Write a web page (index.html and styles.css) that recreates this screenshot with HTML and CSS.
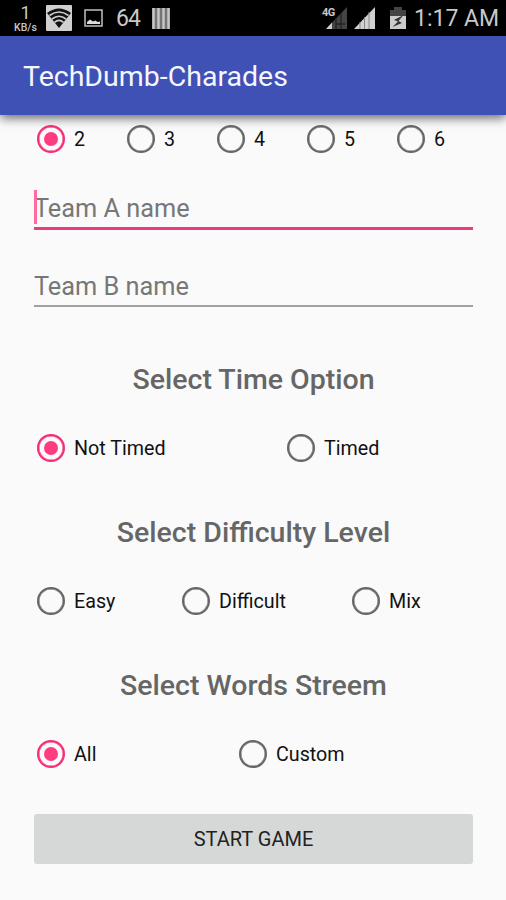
FILE: index.html
```html
<!DOCTYPE html>
<html lang="en">
<head>
<meta charset="utf-8">
<title>TechDumb-Charades</title>
<link rel="stylesheet" href="styles.css">
</head>
<body>
<div class="status">
  <div class="speed"><span class="speed-num">1</span><span class="speed-unit">KB/s</span></div>
  <svg class="wifi" width="26" height="26" viewBox="0 0 26 26"><rect width="26" height="26" rx="1" fill="#d0d0d0"/><path d="M1 8Q13-1 25 8L13 23Z" fill="#111"/><g fill="none" stroke="#d0d0d0" stroke-width="1.6"><path d="M3.500 10.500Q13 3.500 22.500 10.500M6 14Q13 8.500 20 14M8.500 17.300Q13 13.500 17.500 17.300"/></g></svg>
  <svg class="photo" width="19" height="18" viewBox="0 0 19 18"><rect x="1" y="1" width="17" height="16" fill="none" stroke="#b5b5b5" stroke-width="1.600"/><path d="M3 15v-2l3-2.500 3 2 2.500-1 2 1.500 2.500-.5V15Z" fill="#ddd"/></svg>
  <span class="count">64</span>
  <svg class="bars" width="18" height="21" viewBox="0 0 18 21"><rect width="18" height="21" fill="#747474"/><path d="M1.500 0v21M6.500 0v21M11.500 0v21M16.500 0v21" stroke="#c8c8c8" stroke-width="2.400"/></svg>
  <div class="network">
    <svg width="26" height="23" viewBox="0 0 26 23"><path d="M4 22 25 0V22Z" fill="#444"/><path d="M4 22 10 15.500V22Z" fill="#ccc"/><path d="M14 11v11M19 6v16M14 17h9" stroke="#222" stroke-width="1.300"/></svg>
    <span class="network-label">4G</span>
  </div>
  <svg class="signal" width="21" height="22" viewBox="0 0 21 22"><path d="M0 22 21 0V22Z" fill="#d0d0d0"/><path d="M6 15v7M10.500 10v12M15 5v17" stroke="#888" stroke-width="1"/></svg>
  <svg class="battery" width="16" height="22" viewBox="0 0 16 22"><path d="M0 3H4V0H12V3H16V22H0Z" fill="#444"/><path d="M0 9H16V22H0Z" fill="#ccc"/><path d="M13.500 8 4 13 8 14.500 2.500 20 12 16 8.500 14Z" fill="#333"/></svg>
  <span class="clock">1:17 AM</span>
</div>
<header class="appbar"><h1>TechDumb-Charades</h1></header>
<main>
  <div class="options teams">
    <label class="option"><i class="radio on"></i><span>2</span></label>
    <label class="option"><i class="radio"></i><span>3</span></label>
    <label class="option"><i class="radio"></i><span>4</span></label>
    <label class="option"><i class="radio"></i><span>5</span></label>
    <label class="option"><i class="radio"></i><span>6</span></label>
  </div>
  <div class="field focused"><span>Team A name</span></div>
  <div class="field"><span>Team B name</span></div>
  <h2 class="time-title"><span>Select Time Option</span></h2>
  <div class="options timing">
    <label class="option"><i class="radio on"></i><span>Not Timed</span></label>
    <label class="option"><i class="radio"></i><span>Timed</span></label>
  </div>
  <h2><span>Select Difficulty Level</span></h2>
  <div class="options difficulty">
    <label class="option"><i class="radio"></i><span>Easy</span></label>
    <label class="option"><i class="radio"></i><span>Difficult</span></label>
    <label class="option"><i class="radio"></i><span>Mix</span></label>
  </div>
  <h2><span>Select Words Streem</span></h2>
  <div class="options words">
    <label class="option"><i class="radio on"></i><span>All</span></label>
    <label class="option"><i class="radio"></i><span>Custom</span></label>
  </div>
  <button class="start">START GAME</button>
</main>
</body>
</html>
```
FILE: styles.css
```css
* { box-sizing: border-box; }
body {
  margin: 0;
  height: 900px;
  overflow: hidden;
  background: #fafafa;
  color: #111;
  font-family: Roboto, "Liberation Sans", sans-serif;
}
.status {
  display: flex;
  align-items: center;
  height: 36px;
  padding-left: 12px;
  background: #000;
  color: #c8c8c8;
}
.speed {
  display: flex;
  flex-direction: column;
  align-items: center;
  width: 27px;
}
.speed-num { font-size: 18px; line-height: 19px; }
.speed-unit { font-size: 10.5px; line-height: 12px; font-weight: 500; }
.wifi { margin-left: 7px; }
.photo { margin-left: 12px; }
.count { margin-left: 13px; width: 23px; font-size: 23px; letter-spacing: -1px; line-height: 36px; padding-top: 1px; }
.bars { margin-left: 13px; }
.network { position: relative; width: 26px; height: 23px; margin-left: 152px; }
.network-label {
  position: absolute;
  left: 0;
  top: 0;
  font-size: 11px;
  line-height: 11px;
  font-weight: 700;
  letter-spacing: -0.5px;
}
.signal { margin-left: 6px; }
.battery { margin-left: 15px; }
.clock { margin-left: 8px; padding-top: 2px; font-size: 23px; line-height: 36px; white-space: nowrap; }
.appbar {
  display: flex;
  align-items: center;
  height: 79px;
  padding: 2px 0 0 23px;
  background: #3f51b5;
  box-shadow: 0 3px 10px rgba(0, 0, 0, 0.6);
}
h1 { margin: 0; color: #f5f6ff; font-size: 28.5px; font-weight: 400; line-height: 36px; }
main { display: flex; flex-direction: column; padding: 10px 33px 0 34px; }
.options { display: grid; height: 28px; padding-left: 3px; font-size: 19.7px; }
.teams { grid-template-columns: repeat(5, 90px); width: 450px; }
.timing { grid-template-columns: 250px auto; }
.difficulty { grid-template-columns: 145px 170px auto; }
.words { grid-template-columns: 202px auto; }
.option { display: flex; align-items: center; gap: 9px; white-space: nowrap; }
.option span { padding-top: 1px; }
.radio {
  display: grid;
  place-items: center;
  flex: none;
  width: 28px;
  height: 28px;
  border: 2px solid #666;
  box-shadow: inset 0 0 0 0.5px #666;
  border-radius: 50%;
}
.radio.on { border-color: #f52c76; box-shadow: inset 0 0 0 0.5px #f52c76; }
.radio.on::after { content: ""; width: 14px; height: 14px; border-radius: 50%; background: #ff3b81; }
.field {
  position: relative;
  height: 77px;
  padding-top: 40px;
  border-bottom: 2px solid #a0a0a0;
  color: #777;
  font-size: 25.3px;
  line-height: 34px;
}
.focused { padding-top: 39px; border-bottom: 3px solid #ee3a80; }
.focused::before { content: ""; position: absolute; left: 0; top: 37px; width: 3px; height: 34px; background: #ff6b9e; }
h2 {
  margin: 52px 0 35px;
  height: 38px;
  color: #666;
  font-size: 28.5px;
  font-weight: 500;
  line-height: 38px;
  text-align: center;
}
.time-title { margin-top: 54px; }
.start {
  height: 50px;
  margin-top: 46px;
  padding: 0;
  border: 0;
  border-radius: 3px;
  background: #d6d8d7;
  color: #222;
  font: 400 20px Roboto, "Liberation Sans", sans-serif;
}
```
